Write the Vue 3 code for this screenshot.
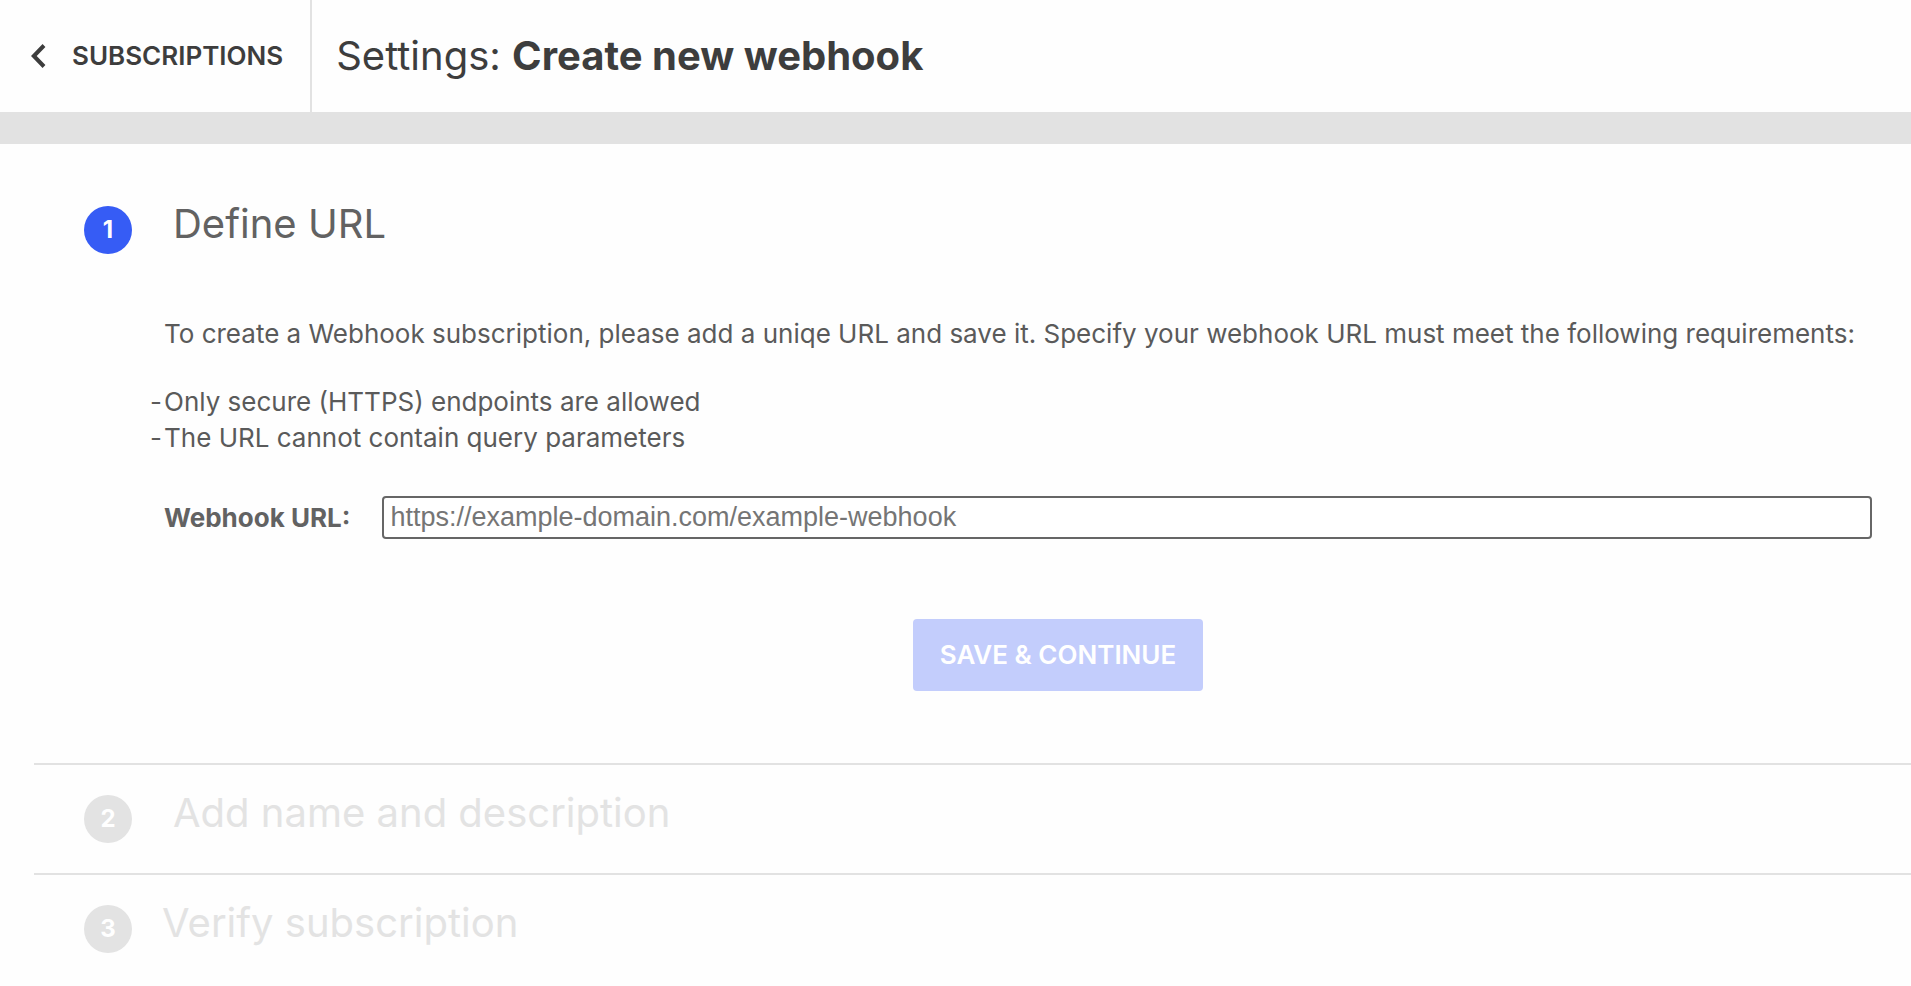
<template>
  <div class="page">
    <header class="header">
      <a class="back" href="#">
        <svg class="back-icon" viewBox="0 0 16 24" aria-hidden="true">
          <path d="M14 1.5 3.8 12 14 22.5" />
        </svg>
        <span>SUBSCRIPTIONS</span>
      </a>
      <h1 class="title">Settings: <strong>Create new webhook</strong></h1>
    </header>

    <main class="steps">
      <section class="step current">
        <div class="step-head">
          <span class="step-number">1</span>
          <h2 class="step-title">Define URL</h2>
        </div>

        <form class="step-body" @submit.prevent>
          <p class="intro">
            To create a Webhook subscription, please add a uniqe URL and save it. Specify your webhook URL must meet the following requirements:
          </p>
          <ul class="rules">
            <li v-for="rule in rules" :key="rule">{{ rule }}</li>
          </ul>
          <div class="field">
            <label class="field-label" for="webhook-url">Webhook URL:</label>
            <input
              id="webhook-url"
              v-model="url"
              class="field-input"
              type="text"
              placeholder="https://example-domain.com/example-webhook"
            />
          </div>
          <div class="actions">
            <button class="save-btn" type="submit" :disabled="!url">SAVE &amp; CONTINUE</button>
          </div>
        </form>
      </section>

      <section v-for="step in nextSteps" :key="step.number" class="step">
        <div class="step-head" :class="{ last: step.number === 3 }">
          <span class="step-number">{{ step.number }}</span>
          <h2 class="step-title">{{ step.title }}</h2>
        </div>
      </section>
    </main>
  </div>
</template>

<script setup>
import { ref } from 'vue'

const url = ref('')

const rules = [
  'Only secure (HTTPS) endpoints are allowed',
  'The URL cannot contain query parameters'
]

const nextSteps = [
  { number: 2, title: 'Add name and description' },
  { number: 3, title: 'Verify subscription' }
]
</script>

<style>
body {
  margin: 0;
  background: #fefefe;
}
</style>

<style scoped>
.page {
  font-family: Inter, 'Liberation Sans', sans-serif;
  font-size: 26px;
  line-height: 36px;
  color: #5a5a5a;
}

.header {
  display: flex;
  min-height: 112px;
  border-bottom: 32px solid #e2e2e2;
  color: #3d3d3d;
}

.back {
  display: flex;
  align-items: center;
  gap: 26px;
  padding: 0 27px 0 30px;
  border-right: 2px solid #e2e2e2;
  font-weight: 600;
  color: inherit;
  text-decoration: none;
}

.back-icon {
  width: 16px;
  height: 24px;
  fill: none;
  stroke: currentColor;
  stroke-width: 4;
}

.title {
  align-self: center;
  margin: 0;
  padding-left: 24px;
  font-size: 40px;
  line-height: 48px;
  font-weight: 400;
}

.title strong {
  font-weight: 700;
}

.steps {
  padding-left: 34px;
}

.step {
  padding: 24px 0 30px;
  border-bottom: 2px solid #e2e2e2;
  color: #e3e3e3;
}

.step:last-child {
  border-bottom: 0;
}

.step.current {
  padding: 56px 0 72px;
  color: #626262;
}

.step-head {
  display: flex;
  align-items: flex-start;
  gap: 41px;
  padding-left: 50px;
}

.step-head.last {
  gap: 30px;
}

.step-number {
  width: 48px;
  margin-top: 6px;
  border-radius: 50%;
  background: #e3e3e3;
  color: #fff;
  font-size: 24px;
  line-height: 48px;
  font-weight: 700;
  text-align: center;
}

.current .step-number {
  background: #365cf5;
}

.step-title {
  margin: 0;
  font-size: 40px;
  line-height: 48px;
  font-weight: 400;
}

.step-body {
  padding: 62px 39px 0 130px;
  color: #5a5a5a;
}

.intro {
  margin: 0;
}

.rules {
  margin: 32px 0 0;
  padding: 0;
  list-style: none;
}

.rules li::before {
  content: '-';
  display: inline-block;
  width: 14px;
  margin-left: -14px;
}

.field {
  display: flex;
  align-items: center;
  gap: 32px;
  margin-top: 40px;
}

.field-label {
  font-weight: 700;
  color: #626262;
}

.field-input {
  flex: 1;
  min-width: 0;
  box-sizing: border-box;
  height: 43px;
  padding: 0 6px;
  border: 2px solid #666;
  border-radius: 4px;
  background: #fff;
  font-family: 'Liberation Sans', sans-serif;
  font-size: 27px;
  color: #3d3d3d;
}

.field-input::placeholder {
  color: #757575;
}

.actions {
  display: flex;
  justify-content: center;
  margin-top: 80px;
  padding-left: 80px;
}

.save-btn {
  padding: 18px 27px;
  border: 0;
  border-radius: 4px;
  background: #365cf5;
  color: #fff;
  font-family: inherit;
  font-size: 26px;
  line-height: 36px;
  font-weight: 600;
  cursor: pointer;
}

.save-btn:disabled {
  background: #c3cdfc;
  cursor: default;
}
</style>
